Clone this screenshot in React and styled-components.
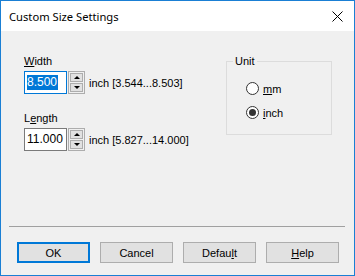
import React from 'react';
import styled, { createGlobalStyle } from 'styled-components';

const Global = createGlobalStyle`
  html, body { margin: 0; padding: 0; background: #f0f0f0; }
  * { box-sizing: border-box; }
`

const Window = styled.div`
  width: 355px;
  height: 276px;
  border: 1px solid #1a7fd4;
  display: flex;
  flex-direction: column;
  font-family: "Liberation Sans", Arial, sans-serif;
  font-size: 11px;
  color: #000;
`

const TitleBar = styled.div`
  height: 30px;
  background: #fff;
  display: flex;
  align-items: center;
  justify-content: space-between;
  padding: 0 11px 0 8px;
  font-family: "Noto Sans", sans-serif;
  font-size: 11.2px;
  color: #000;
`

const Client = styled.div`
  flex: 1;
  background: #f0f0f0;
  display: flex;
  flex-direction: column;
`

const Body = styled.div`
  flex: 1;
  display: flex;
  justify-content: space-between;
  padding: 24px 22px 0 23px;
`

const Column = styled.div`
  display: flex;
  flex-direction: column;
`

const Field = styled.div`
  display: flex;
  flex-direction: column;
  margin-bottom: ${p => p.$gap || 0}px;
`

const Label = styled.div`
  height: 13px;
  line-height: 13px;
  margin-bottom: 3px;
`

const U = styled.span`
  text-decoration: underline;
  text-underline-offset: 1px;
`

const InputRow = styled.div`
  display: flex;
  align-items: center;
`

const Box = styled.div`
  width: 43px;
  height: 23px;
  border: 1px solid ${p => p.$focus ? '#0078d7' : '#7a7a7a'};
  background: #fff;
  display: flex;
  align-items: center;
  padding-left: 2px;
  font-size: 12px;
`

const Sel = styled.span`
  background: ${p => p.$on ? '#0078d7' : 'transparent'};
  color: ${p => p.$on ? '#fff' : '#000'};
  line-height: 15px;
  padding-right: 1px;
`

const Spin = styled.div`
  width: 17px;
  height: 23px;
  margin-left: 1px;
  border: 1px solid #adadad;
  display: flex;
  flex-direction: column;
  gap: 1px;
  padding: 1px;
  background: #f0f0f0;
`

const SpinBtn = styled.div`
  flex: 1;
  background: #e1e1e1;
  border: 1px solid #adadad;
  display: flex;
  align-items: center;
  justify-content: center;
`

const Arrow = styled.div`
  width: 0;
  height: 0;
  border-left: 3px solid transparent;
  border-right: 3px solid transparent;
  ${p => p.$up ? 'border-bottom: 3px solid #000;' : 'border-top: 3px solid #000;'}
`

const Range = styled.span`
  margin-left: 4px;
`

const Group = styled.fieldset`
  margin: 0;
  width: 106px;
  height: 80px;
  border: 1px solid #dcdcdc;
  padding: 14px 0 0 0;
  display: block;
`

const Legend = styled.legend`
  padding: 0 2px;
  margin-left: 6px;
  font-size: 11px;
  line-height: 13px;
`

const Options = styled.div`
  display: flex;
  flex-direction: column;
  gap: 11px;
  padding-left: 19px;
`

const RadioRow = styled.label`
  display: flex;
  align-items: center;
  gap: 4px;
  height: 13px;
`

const Circle = styled.span`
  width: 13px;
  height: 13px;
  border-radius: 50%;
  border: 1px solid #333;
  background: #fff;
  display: flex;
  align-items: center;
  justify-content: center;
  &::after {
    content: '';
    width: 7px;
    height: 7px;
    border-radius: 50%;
    background: ${p => p.$on ? '#333' : 'transparent'};
  }
`

const Separator = styled.div`
  height: 1px;
  background: #a0a0a0;
  margin: 0 9px 15px 8px;
`

const Buttons = styled.div`
  display: flex;
  gap: 10px;
  padding: 0 15px 12px 16px;
`

const Button = styled.div`
  width: 73px;
  height: 21px;
  background: #e1e1e1;
  border: ${p => p.$default ? '2px solid #0078d7' : '1px solid #adadad'};
  display: flex;
  align-items: center;
  justify-content: center;
  font-size: 11px;
`

const CloseIcon = () => (
  <svg width="11" height="11" viewBox="0 0 11 11">
    <path d="M0.5 0.5 L10.5 10.5 M10.5 0.5 L0.5 10.5" stroke="#000" strokeWidth="1" />
  </svg>
)

const Spinner = () => (
  <Spin>
    <SpinBtn><Arrow $up /></SpinBtn>
    <SpinBtn><Arrow /></SpinBtn>
  </Spin>
)

export default function App() {
  return (
    <Window>
      <Global />
      <TitleBar>
        <span>Custom Size Settings</span>
        <CloseIcon />
      </TitleBar>
      <Client>
        <Body>
          <Column>
            <Field $gap={18}>
              <Label><U>W</U>idth</Label>
              <InputRow>
                <Box $focus><Sel $on>8.500</Sel></Box>
                <Spinner />
                <Range>inch [3.544...8.503]</Range>
              </InputRow>
            </Field>
            <Field>
              <Label>L<U>e</U>ngth</Label>
              <InputRow>
                <Box><Sel>11.000</Sel></Box>
                <Spinner />
                <Range>inch [5.827...14.000]</Range>
              </InputRow>
            </Field>
          </Column>
          <Group>
            <Legend>Unit</Legend>
            <Options>
              <RadioRow><Circle /><span><U>m</U>m</span></RadioRow>
              <RadioRow><Circle $on /><span><U>i</U>nch</span></RadioRow>
            </Options>
          </Group>
        </Body>
        <Separator />
        <Buttons>
          <Button $default>OK</Button>
          <Button>Cancel</Button>
          <Button>Defau<U>l</U>t</Button>
          <Button><U>H</U>elp</Button>
        </Buttons>
      </Client>
    </Window>
  );
}
